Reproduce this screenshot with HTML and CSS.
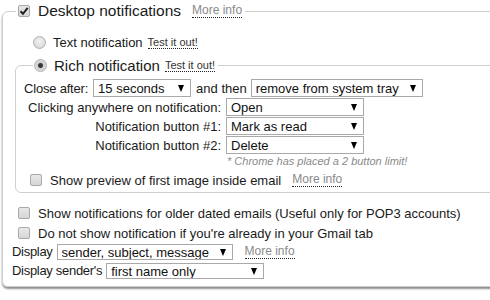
FILE: index.html
```html
<!DOCTYPE html>
<html>
<head>
<meta charset="utf-8">
<link rel="stylesheet" href="styles.css">
</head>
<body>
<fieldset class="outer">
  <legend class="outer-legend">
    <span class="chk"><svg width="10" height="10" viewBox="0 0 10 10"><path d="M1.5 5.2 L4 7.8 L8.7 1.8" fill="none" stroke="#222" stroke-width="2"/></svg></span><span class="title">Desktop notifications</span><a class="more">More info</a>
  </legend>
  <div class="radio-row"><span class="radio"></span><span>Text notification</span><a class="test">Test it out!</a></div>
  <fieldset class="inner">
    <legend class="inner-legend"><span class="radio on"></span><span class="rich">Rich notification</span><a class="test">Test it out!</a></legend>
    <div class="row-close">
      <span>Close after:</span>
      <span class="sel w98"><select><option>15 seconds</option></select><i class="arr"></i></span>
      <span>and then</span>
      <span class="sel w172"><select><option>remove from system tray</option></select><i class="arr"></i></span>
    </div>
    <div class="grid">
      <span class="lbl">Clicking anywhere on notification:</span>
      <span class="sel w138"><select><option>Open</option></select><i class="arr"></i></span>
      <span class="lbl">Notification button #1:</span>
      <span class="sel w138"><select><option>Mark as read</option></select><i class="arr"></i></span>
      <span class="lbl">Notification button #2:</span>
      <span class="sel w138"><select><option>Delete</option></select><i class="arr"></i></span>
      <span></span>
      <span class="note">* Chrome has placed a 2 button limit!</span>
    </div>
    <div class="check-row preview"><span class="chk"></span><span>Show preview of first image inside email</span><a class="more">More info</a></div>
  </fieldset>
  <div class="check-row first"><span class="chk"></span><span>Show notifications for older dated emails (Useful only for POP3 accounts)</span></div>
  <div class="check-row second"><span class="chk"></span><span>Do not show notification if you're already in your Gmail tab</span></div>
  <div class="disp-row"><span class="dlbl">Display</span><span class="sel w176 short"><select><option>sender, subject, message</option></select><i class="arr"></i></span><a class="more">More info</a></div>
  <div class="disp-row"><span class="dlbl">Display sender's</span><span class="sel w158 short"><select><option>first name only</option></select><i class="arr"></i></span></div>
</fieldset>
</body>
</html>
```
FILE: styles.css
```css
html, body {
  margin: 0;
  padding: 0;
  background: #fff;
  overflow: hidden;
}
body {
  font-family: "Liberation Sans", Arial, sans-serif;
  font-size: 13px;
  color: #1a1a1a;
  width: 490px;
  height: 300px;
}
a { text-decoration: none; cursor: pointer; }

fieldset { margin: 0; min-width: 0; }

.outer {
  margin: 1px 0 0 2px;
  width: 560px;
  border: 1px solid #cfcfcf;
  border-radius: 6px;
  padding: 0 0 6px 9px;
  box-shadow: 0 2px 2px rgba(0,0,0,0.45);
}
.outer-legend {
  margin-left: 4px;
  padding: 0 3px 0 2px;
  height: 20px;
  display: flex;
  align-items: center;
}
.title {
  font-size: 15.5px;
  margin-left: 8px;
  margin-right: 11px;
}
.more {
  color: #8a8a8a;
  font-size: 12px;
  border-bottom: 1px dotted #222;
  line-height: 13px;
}
.test {
  color: #333;
  font-size: 11px;
  border-bottom: 1px dotted #222;
  line-height: 12px;
  margin-left: 5px;
}

.chk {
  display: inline-flex;
  align-items: center;
  justify-content: center;
  width: 10px;
  height: 10px;
  border: 1px solid #a8a8a8;
  border-radius: 2px;
  background: linear-gradient(#e8e8e8, #d6d6d6);
  flex: none;
}
.chk svg { display: block; }

.radio {
  display: inline-block;
  width: 11px;
  height: 11px;
  border: 1px solid #b0b0b0;
  border-radius: 50%;
  background: radial-gradient(circle at 50% 40%, #f2f2f2, #d2d2d2);
  flex: none;
  box-sizing: content-box;
}
.radio.on {
  background: radial-gradient(circle, #3a3a3a 0, #3a3a3a 2px, #cfcfcf 3px, #dedede 6px);
}

.radio-row {
  display: flex;
  align-items: center;
  height: 16px;
  margin: 13px 0 0 21px;
}
.radio-row .radio { margin-right: 7px; }

.inner {
  margin: 6px 0 0 3px;
  border: 1px solid #cfcfcf;
  border-radius: 6px;
  padding: 0 0 4px 8px;
}
.inner-legend {
  margin-left: 9px;
  padding: 0 3px 0 1px;
  height: 18px;
  display: flex;
  align-items: center;
}
.inner-legend .radio { margin-right: 7px; }
.rich { font-size: 15px; }

.sel {
  position: relative;
  display: inline-block;
  height: 18px;
  box-sizing: border-box;
  border: 1px solid #a9a9a9;
  background: #fff;
}
.sel.short { height: 16px; }
.sel select {
  appearance: none;
  -webkit-appearance: none;
  border: 0;
  margin: 0;
  padding: 0 0 0 4px;
  width: 100%;
  height: 100%;
  font: inherit;
  color: #111;
  background: transparent;
  outline: none;
}
.arr {
  position: absolute;
  right: 6px;
  top: 50%;
  margin-top: -3px;
  width: 0;
  height: 0;
  border-left: 3.5px solid transparent;
  border-right: 3.5px solid transparent;
  border-top: 7px solid #000;
}
.w98 { width: 98px; }
.w172 { width: 172px; }
.w138 { width: 138px; }
.w176 { width: 176px; }
.w158 { width: 158px; }

.row-close {
  display: flex;
  align-items: center;
  margin-top: 5px;
}
.row-close > span:first-child { margin-right: 5px; letter-spacing: -0.2px; }
.row-close > span:nth-child(3) { margin: 0 4px 0 5px; }

.grid {
  display: grid;
  grid-template-columns: 197px auto;
  column-gap: 5px;
  row-gap: 1px;
  align-items: center;
  margin-top: 1px;
}
.lbl { text-align: right; }
.note {
  font-size: 11px;
  font-style: italic;
  color: #8a8a8a;
  line-height: 13px;
  margin: 0 0 0 1px;
}

.check-row {
  display: flex;
  align-items: center;
  height: 16px;
}
.check-row .chk { margin-right: 8px; }
.preview { margin: 4px 0 0 6px; }
.preview .more { margin-left: 11px; }
.first { margin: 12px 0 0 6px; }
.second { margin: 4px 0 0 6px; }

.disp-row {
  display: flex;
  align-items: center;
  height: 19px;
}
.dlbl { letter-spacing: -0.3px; margin-right: 4px; }
.disp-row .more { margin-left: 12px; }
.check-row.second + .disp-row { margin-top: 1px; }
```
